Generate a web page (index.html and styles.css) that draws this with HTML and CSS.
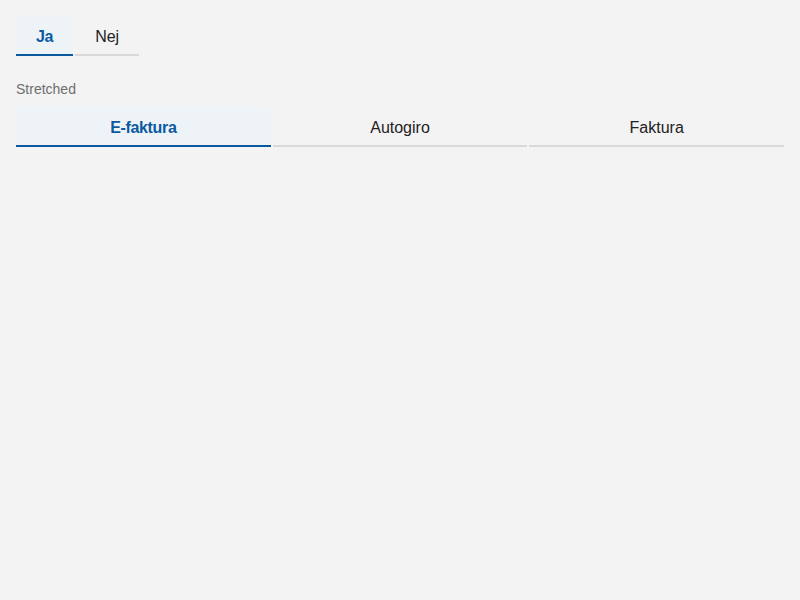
FILE: index.html
```html
<!DOCTYPE html>
<html lang="sv">
<head>
<meta charset="utf-8">
<title>Tabs</title>
<link rel="stylesheet" href="styles.css">
</head>
<body>
  <div class="tabs">
    <button class="tab active">Ja</button>
    <button class="tab">Nej</button>
  </div>
  <div class="label">Stretched</div>
  <div class="tabs stretched">
    <button class="tab active">E-faktura</button>
    <button class="tab">Autogiro</button>
    <button class="tab">Faktura</button>
  </div>
</body>
</html>
```
FILE: styles.css
```css
html, body {
  margin: 0;
  background: #f3f3f3;
}
body {
  padding: 16px;
  font-family: "Liberation Sans", Arial, sans-serif;
}
.tabs {
  display: flex;
  gap: 2px;
}
.tab {
  box-sizing: border-box;
  height: 40px;
  padding: 4px 20px 0;
  margin: 0;
  border: none;
  border-bottom: 2px solid #d9d9d9;
  background: transparent;
  font-family: "Liberation Sans", Arial, sans-serif;
  font-size: 16px;
  color: #222;
  line-height: 34px;
  cursor: pointer;
}
.tab.active {
  background: #eef3f8;
  color: #0b5aa0;
  font-weight: bold;
  letter-spacing: -0.33px;
  border-bottom-color: #0b5aa0;
}
.stretched .tab {
  flex: 1 1 0;
}
.label {
  margin: 25px 0 10px;
  font-size: 14px;
  line-height: 16px;
  color: #6e6e6e;
}
```
